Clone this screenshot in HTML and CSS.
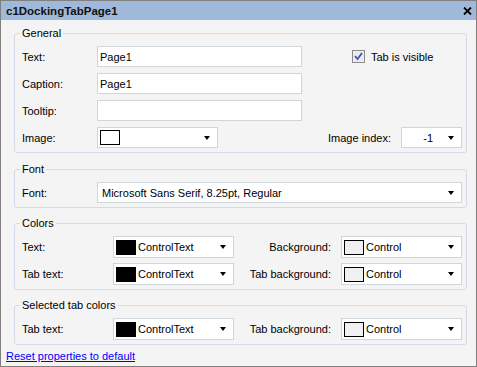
FILE: index.html
```html
<!DOCTYPE html>
<html lang="en">

<head>
    <meta charset="UTF-8">
    <title>c1DockingTabPage1</title>
    <link rel="stylesheet" href="styles.css">
</head>

<body>
    <div class="window">
        <div class="titlebar">
            <span class="title">c1DockingTabPage1</span>
            <svg class="close" width="9" height="8" viewBox="0 0 9 8">
                <path d="M1 0.5 L8 7.5 M8 0.5 L1 7.5" stroke="#000" stroke-width="1.8" />
            </svg>
        </div>

        <div class="content">
            <fieldset class="group general">
                <legend>General</legend>
                <div class="row">
                    <label class="lbl">Text:</label>
                    <div class="field text-field">Page1</div>
                    <div class="check">
                        <svg class="box" width="13" height="13" viewBox="0 0 13 13">
                            <rect x="0.5" y="0.5" width="12" height="12" fill="#ececec" stroke="#8c8c8c" />
                            <path d="M3 6 L5.5 9 L10 3" fill="none" stroke="#3756b8" stroke-width="1.8" />
                        </svg>
                        <span>Tab is visible</span>
                    </div>
                </div>
                <div class="row">
                    <label class="lbl">Caption:</label>
                    <div class="field text-field">Page1</div>
                </div>
                <div class="row">
                    <label class="lbl">Tooltip:</label>
                    <div class="field text-field"></div>
                </div>
                <div class="row">
                    <label class="lbl">Image:</label>
                    <div class="field combo image-combo">
                        <span class="swatch white"></span>
                        <span class="arrow"></span>
                    </div>
                    <label class="lbl-right index-lbl">Image index:</label>
                    <div class="field combo index-combo">
                        <span class="value">-1</span>
                        <span class="arrow"></span>
                    </div>
                </div>
            </fieldset>

            <fieldset class="group">
                <legend>Font</legend>
                <div class="row">
                    <label class="lbl">Font:</label>
                    <div class="field combo font-combo">
                        <span class="value">Microsoft Sans Serif, 8.25pt, Regular</span>
                        <span class="arrow"></span>
                    </div>
                </div>
            </fieldset>

            <fieldset class="group">
                <legend>Colors</legend>
                <div class="color-row">
                    <label class="lbl">Text:</label>
                    <div class="field combo color-combo">
                        <span class="swatch black"></span>
                        <span class="value">ControlText</span>
                        <span class="arrow"></span>
                    </div>
                    <label class="lbl-right">Background:</label>
                    <div class="field combo color-combo">
                        <span class="swatch control"></span>
                        <span class="value">Control</span>
                        <span class="arrow"></span>
                    </div>
                </div>
                <div class="color-row">
                    <label class="lbl">Tab text:</label>
                    <div class="field combo color-combo">
                        <span class="swatch black"></span>
                        <span class="value">ControlText</span>
                        <span class="arrow"></span>
                    </div>
                    <label class="lbl-right">Tab background:</label>
                    <div class="field combo color-combo">
                        <span class="swatch control"></span>
                        <span class="value">Control</span>
                        <span class="arrow"></span>
                    </div>
                </div>
            </fieldset>

            <fieldset class="group">
                <legend>Selected tab colors</legend>
                <div class="color-row">
                    <label class="lbl">Tab text:</label>
                    <div class="field combo color-combo">
                        <span class="swatch black"></span>
                        <span class="value">ControlText</span>
                        <span class="arrow"></span>
                    </div>
                    <label class="lbl-right">Tab background:</label>
                    <div class="field combo color-combo">
                        <span class="swatch control"></span>
                        <span class="value">Control</span>
                        <span class="arrow"></span>
                    </div>
                </div>
            </fieldset>
        </div>

        <a class="reset" href="#">Reset properties to default</a>
    </div>
</body>

</html>
```

FILE: styles.css
```css
body {
    margin: 0;
    font-family: 'Liberation Sans', Arial, sans-serif;
    font-size: 11px;
    color: #000;
    background: #fff;
}

.window {
    width: 477px;
    height: 367px;
    box-sizing: border-box;
    border: 1px solid #7f7f7f;
    background-color: #f4f4f4;
    display: flex;
    flex-direction: column;
}

.titlebar {
    height: 19px;
    flex-shrink: 0;
    background-color: #a0b8d9;
    display: flex;
    align-items: center;
    justify-content: space-between;
    padding: 0 4px 0 5px;
}

.title {
    font-weight: bold;
    font-size: 11.5px;
    color: #111;
}

.close {
    display: block;
}

.content {
    padding: 7px 9px 0 13px;
}

.group {
    margin: 0 0 9px 0;
    padding: 6px 4px 4px 7px;
    border: 1px solid #d3dbe6;
    border-radius: 3px;
    min-width: 0;
}

.group.general {
    margin-bottom: 10px;
}

.group:last-child {
    margin-bottom: 0;
}

.group legend {
    padding: 0 2px;
    margin-left: -2px;
    line-height: 13px;
}

.row {
    display: flex;
    align-items: center;
    height: 21px;
    margin-bottom: 6px;
}

.row:last-child,
.color-row:last-child {
    margin-bottom: 0;
}

.lbl {
    width: 75px;
    flex-shrink: 0;
}

.field {
    box-sizing: border-box;
    height: 21px;
    background-color: #fff;
    border: 1px solid #cdd5dd;
    display: flex;
    align-items: center;
    position: relative;
}

.text-field {
    width: 205px;
    padding-left: 2px;
}

.check {
    display: flex;
    align-items: center;
    margin-left: 50px;
}

.check .box {
    margin-right: 6px;
}

.combo .arrow {
    position: absolute;
    right: 7px;
    top: 8px;
    width: 0;
    height: 0;
    border-left: 3.5px solid transparent;
    border-right: 3.5px solid transparent;
    border-top: 4px solid #000;
}

.swatch {
    box-sizing: border-box;
    width: 20px;
    height: 15px;
    margin-left: 2px;
    border: 1px solid #000;
    flex-shrink: 0;
}

.swatch.white {
    background-color: #fff;
}

.swatch.black {
    background-color: #000;
}

.swatch.control {
    background-color: #f0f0f0;
}

.image-combo {
    width: 121px;
}

.lbl-right {
    flex: 1;
    text-align: right;
    padding-right: 10px;
}

.index-combo {
    width: 61px;
    justify-content: flex-end;
    padding-right: 28px;
}

.font-combo {
    width: 365px;
    padding-left: 4px;
}

.color-row {
    display: grid;
    grid-template-columns: 91px 121px 1fr 121px;
    align-items: center;
    margin-bottom: 5px;
}

.color-combo {
    height: 22px;
}

.color-combo .value {
    margin-left: 2px;
}

.color-combo .arrow {
    top: 8px;
}

.reset {
    margin: 5px 0 0 5px;
    color: #0000ff;
    line-height: 13px;
    align-self: flex-start;
}
```
